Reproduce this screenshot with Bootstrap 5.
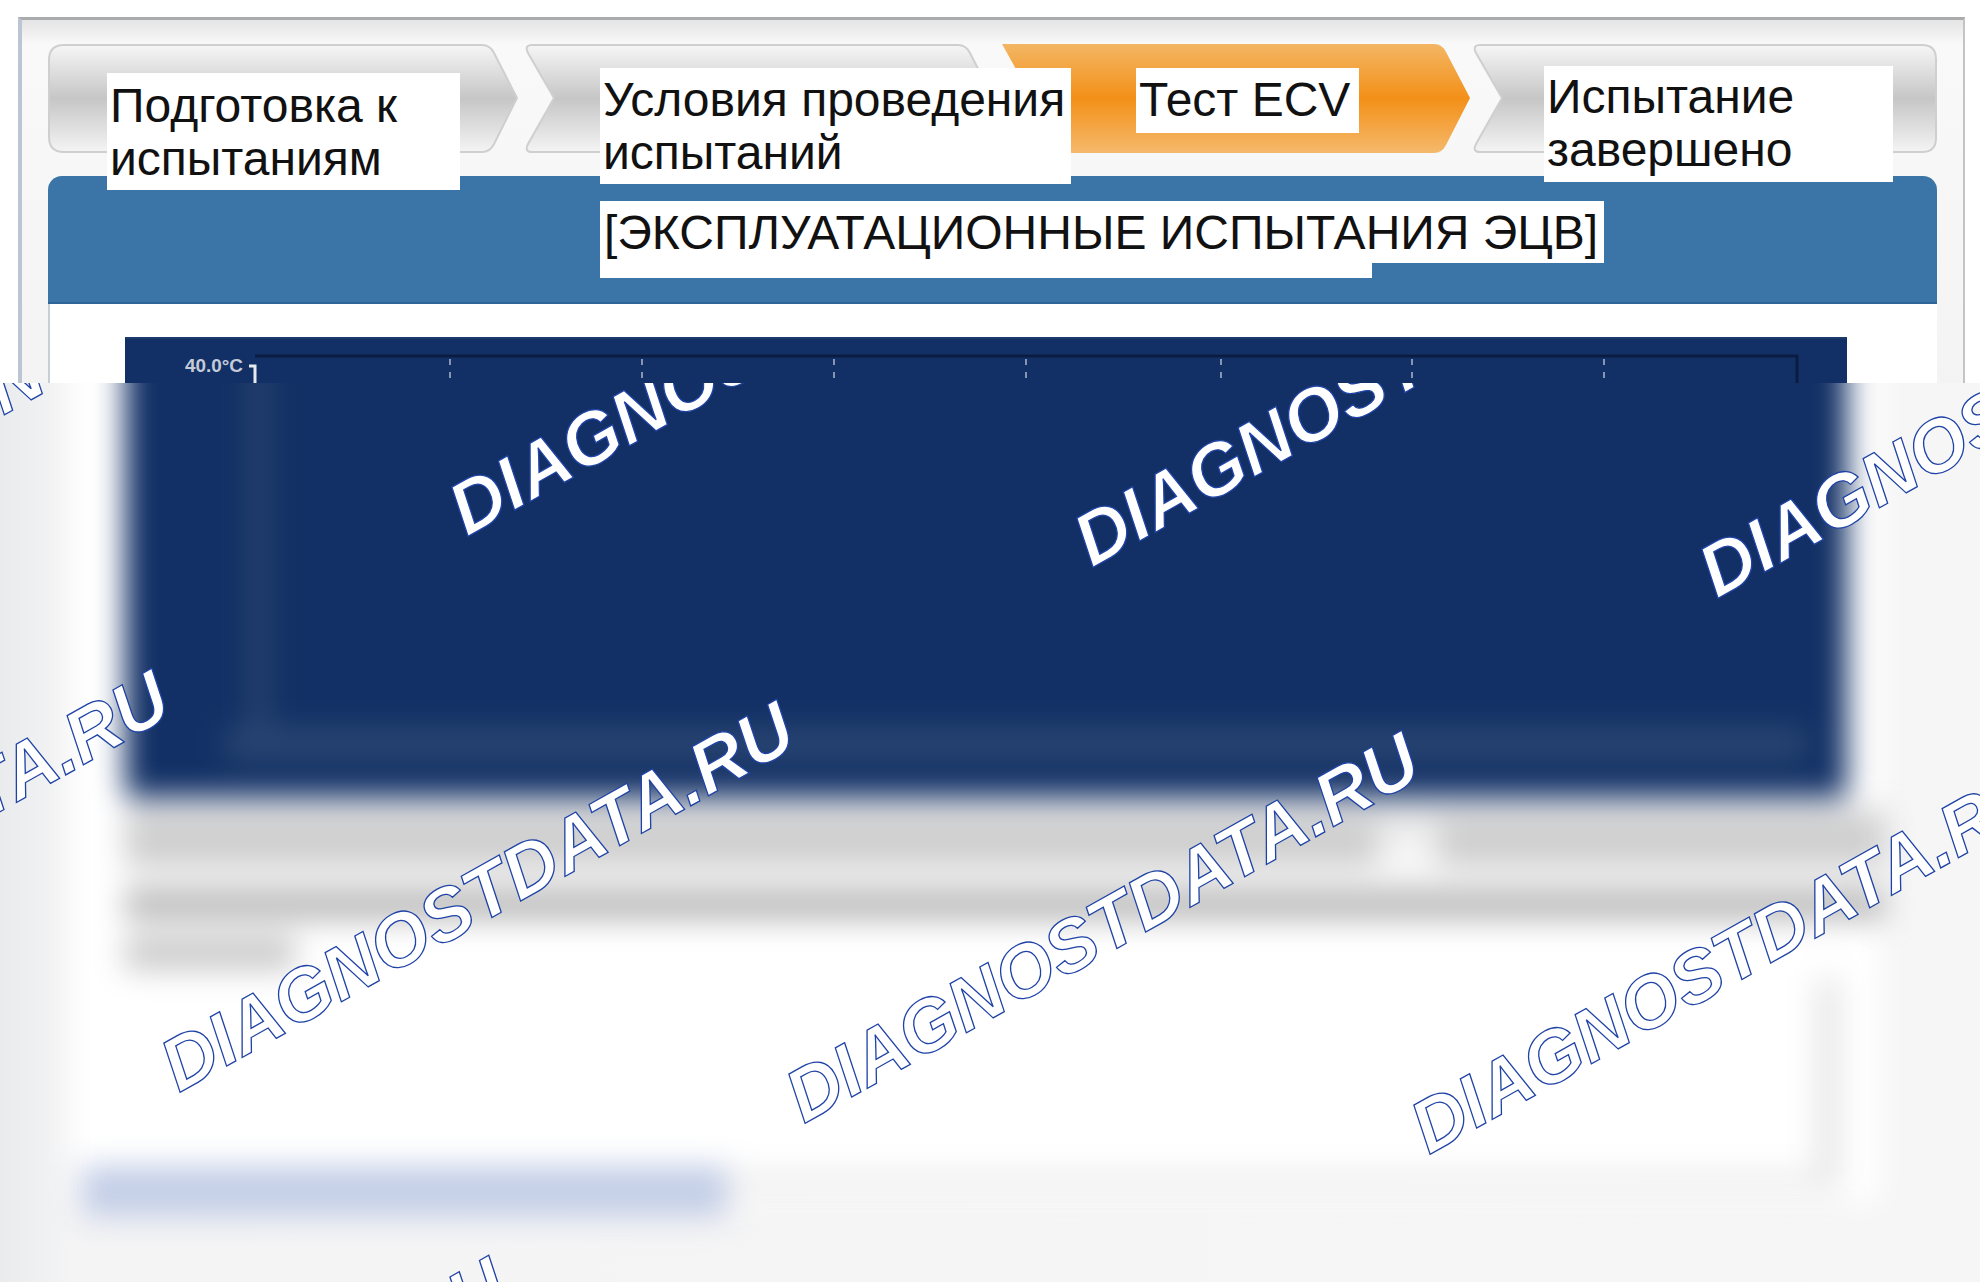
<!DOCTYPE html>
<html lang="ru">

<head>
    <meta charset="UTF-8">
    <meta name="viewport" content="width=device-width, initial-scale=1.0">
    <title>Тест ECV</title>
    <link href="https://cdn.jsdelivr.net/npm/bootstrap@5.3.2/dist/css/bootstrap.min.css" rel="stylesheet">
    <style>
        body {
            font-family: "Liberation Sans", Arial, sans-serif;
            background-color: #fff;
            width: 1980px;
            height: 1282px;
            overflow: hidden;
        }

        /* sharp top part */
        .top-part {
            height: 383px;
            overflow: hidden;
            padding: 17px 15px 0 18px;
        }

        .frame {
            height: 400px;
            padding: 24px 26px 0 26px;
            border-top: 3px solid #a9abad;
            border-left: 4px solid #bcc6d2;
            border-right: 2px solid #c4c4c4;
            background: linear-gradient(#e4e4e4, #f9f9f9 24px, #f3f3f3);
        }

        .steps {
            height: 109px;
            position: relative;
            z-index: 2;
        }

        .step {
            width: 470px;
            height: 109px;
            margin-right: 6px;
            position: relative;
            flex: none;
        }

        .step svg {
            display: block;
        }

        .step-third {
            margin-right: 2px;
        }

        .step-last {
            width: 465px;
            margin-right: 0;
        }

        .step-text {
            position: absolute;
            z-index: 3;
            background: #fff;
            color: #111;
            font-size: 48px;
            line-height: 53px;
            padding-left: 3px;
            white-space: nowrap;
        }

        .st1 { left: 59px; top: 29px; width: 353px; height: 117px; padding-top: 6px; }
        .st2 { left: 76px; top: 24px; width: 471px; height: 116px; padding-top: 5px; }
        .st3 { left: 136px; top: 24px; width: 223px; height: 65px; padding-top: 5px; }
        .st4 { left: 72px; top: 22px; width: 349px; height: 116px; padding-top: 4px; }

        .head-band {
            height: 128px;
            margin-top: 23px;
            padding: 25px 0 0 552px;
            background: #3b74a6;
            border-radius: 14px 14px 0 0;
            border-bottom: 2px solid #2f6596;
        }

        .head-title {
            position: relative;
            width: 1004px;
            height: 62px;
            padding: 5px 0 0 4px;
            background: #fff;
            color: #111;
            font-size: 48px;
            line-height: 53px;
            white-space: nowrap;
        }

        .head-title::after {
            content: "";
            position: absolute;
            left: 0;
            top: 62px;
            width: 772px;
            height: 15px;
            background: #fff;
        }

        .panel-white {
            height: 120px;
            padding: 33px 90px 0 75px;
            background: #fff;
            border-left: 2px solid #c9ced4;
        }

        .chart-top {
            height: 60px;
            background: #123065;
            border-top: 2px solid #1d3a6c;
        }

        .chart-top svg {
            display: block;
        }

        .tick-label {
            font-family: "Liberation Sans", Arial, sans-serif;
            font-size: 19px;
            font-weight: 700;
            fill: #c3cbd8;
        }

        /* blurred lower part */
        .low-part {
            height: 899px;
            position: relative;
            overflow: hidden;
            background: linear-gradient(90deg, #e9ebed, #f4f4f5 70px, #f6f6f6);
        }

        .low-blur {
            height: 860px;
            margin: -40px 100px 0 70px;
            padding: 0 40px 0 55px;
            background: #fff;
            filter: blur(15px);
        }

        .low-chart {
            width: 1722px;
            height: 455px;
            position: relative;
            background: #123065;
        }

        .low-axis {
            position: absolute;
            left: 125px;
            top: 0;
            width: 18px;
            height: 400px;
            background: #2b4670;
        }

        .low-base {
            position: absolute;
            left: 100px;
            right: 40px;
            top: 385px;
            height: 32px;
            background: #2a4672;
        }

        .grey-line {
            width: 1760px;
            background: #cfcfcf;
        }

        .grey-one {
            height: 58px;
            margin-top: 12px;
        }

        .grey-two {
            height: 32px;
            margin-top: 20px;
            background: #bababa;
        }

        .grey-three {
            height: 34px;
            width: 170px;
            margin-top: 16px;
            background: #cacaca;
        }

        .text-gap {
            position: absolute;
            left: 1308px;
            top: 480px;
            width: 60px;
            height: 50px;
            background: #f4f4f4;
        }

        .low-box {
            height: 215px;
            margin: 8px 0 0 -45px;
            position: relative;
            background: #fff;
            border-right: 24px solid #e6e6e6;
            border-bottom: 22px solid #ededed;
        }

        .low-link {
            position: absolute;
            left: 2px;
            top: 188px;
            width: 645px;
            height: 50px;
            background: #c2cde6;
        }

        .water {
            position: absolute;
            left: 0;
            top: 0;
        }

        .water text {
            font-family: "Liberation Sans", Arial, sans-serif;
            font-size: 74px;
            font-weight: 700;
            font-style: italic;
            fill: #fff;
            stroke: #1f43a6;
            stroke-width: 1.3;
        }
    </style>
</head>

<body>
    <svg width="0" height="0" class="position-absolute">
        <defs>
            <linearGradient id="greyStep" x1="0" y1="0" x2="0" y2="1">
                <stop offset="0" stop-color="#f6f6f6" />
                <stop offset="0.5" stop-color="#c6c6c6" />
                <stop offset="1" stop-color="#f4f4f4" />
            </linearGradient>
            <linearGradient id="orangeStep" x1="0" y1="0" x2="0" y2="1">
                <stop offset="0" stop-color="#f3b664" />
                <stop offset="0.5" stop-color="#f39018" />
                <stop offset="1" stop-color="#f5b96c" />
            </linearGradient>
        </defs>
    </svg>

    <!-- Top part -->
    <div class="top-part">
        <div class="frame">
            <div class="steps d-flex">
                <div class="step">
                    <svg width="470" height="109" viewBox="0 0 470 109">
                        <path d="M16 1H434Q442 1 446 9L469 54L446 100Q442 108 434 108H16Q1 108 1 93V16Q1 1 16 1Z" fill="url(#greyStep)" stroke="#cfcfcf" stroke-width="2" />
                    </svg>
                    <div class="step-text st1">Подготовка к<br>испытаниям</div>
                </div>
                <div class="step">
                    <svg width="470" height="109" viewBox="0 0 470 109">
                        <path d="M8 1H434Q442 1 446 9L469 54L446 100Q442 108 434 108H8Q0 108 4 100L30 54L4 9Q0 1 8 1Z" fill="url(#greyStep)" stroke="#cfcfcf" stroke-width="2" />
                    </svg>
                    <div class="step-text st2">Условия проведения<br>испытаний</div>
                </div>
                <div class="step step-third">
                    <svg width="470" height="109" viewBox="0 0 470 109">
                        <path d="M2 0H434Q442 0 446 8L470 54L446 101Q442 109 434 109H2L32 54Z" fill="url(#orangeStep)" />
                    </svg>
                    <div class="step-text st3">Тест ECV</div>
                </div>
                <div class="step step-last">
                    <svg width="465" height="109" viewBox="0 0 465 109">
                        <path d="M8 1H450Q464 1 464 15V94Q464 108 450 108H8Q0 108 4 100L30 54L4 9Q0 1 8 1Z" fill="url(#greyStep)" stroke="#cfcfcf" stroke-width="2" />
                    </svg>
                    <div class="step-text st4">Испытание<br>завершено</div>
                </div>
            </div>

            <div class="head-band">
                <div class="head-title">[ЭКСПЛУАТАЦИОННЫЕ ИСПЫТАНИЯ ЭЦВ]</div>
            </div>

            <div class="panel-white">
                <div class="chart-top">
                    <svg width="1724" height="46" viewBox="0 0 1724 46">
                        <path d="M130 17H1672V46" fill="none" stroke="#0a1c42" stroke-width="3" />
                        <path d="M325 20V46M517 20V46M709 20V46M901 20V46M1096 20V46M1287 20V46M1479 20V46" stroke="#8496b3" stroke-width="2" stroke-dasharray="6 7" />
                        <path d="M124 27H130V46" fill="none" stroke="#e6e9ee" stroke-width="3" />
                        <text class="tick-label" x="60" y="33" textLength="58" lengthAdjust="spacingAndGlyphs">40.0°C</text>
                    </svg>
                </div>
            </div>
        </div>
    </div>

    <!-- Lower part -->
    <div class="low-part">
        <div class="low-blur">
            <div class="low-chart">
                <div class="low-axis"></div>
                <div class="low-base"></div>
            </div>
            <div class="grey-line grey-one"></div>
            <div class="grey-line grey-two"></div>
            <div class="grey-line grey-three"></div>
            <div class="text-gap"></div>
            <div class="low-box">
                <div class="low-link"></div>
            </div>
        </div>

        <svg class="water" width="1980" height="899" viewBox="0 383 1980 899">
            <text transform="translate(-158 506) rotate(-29.3)">DIAGNOSTDATA.RU</text>
            <text transform="translate(467 537) rotate(-29.3)">DIAGNOSTDATA.RU</text>
            <text transform="translate(1092 568) rotate(-29.3)">DIAGNOSTDATA.RU</text>
            <text transform="translate(1717 599) rotate(-29.3)">DIAGNOSTDATA.RU</text>
            <text transform="translate(-446 1062) rotate(-29.3)">DIAGNOSTDATA.RU</text>
            <text transform="translate(179 1093) rotate(-29.3)">DIAGNOSTDATA.RU</text>
            <text transform="translate(804 1124) rotate(-29.3)">DIAGNOSTDATA.RU</text>
            <text transform="translate(1429 1155) rotate(-29.3)">DIAGNOSTDATA.RU</text>
            <text transform="translate(-109 1649) rotate(-29.3)">DIAGNOSTDATA.RU</text>
        </svg>
    </div>

    <script src="https://cdn.jsdelivr.net/npm/bootstrap@5.3.2/dist/js/bootstrap.bundle.min.js"></script>
</body>

</html>
